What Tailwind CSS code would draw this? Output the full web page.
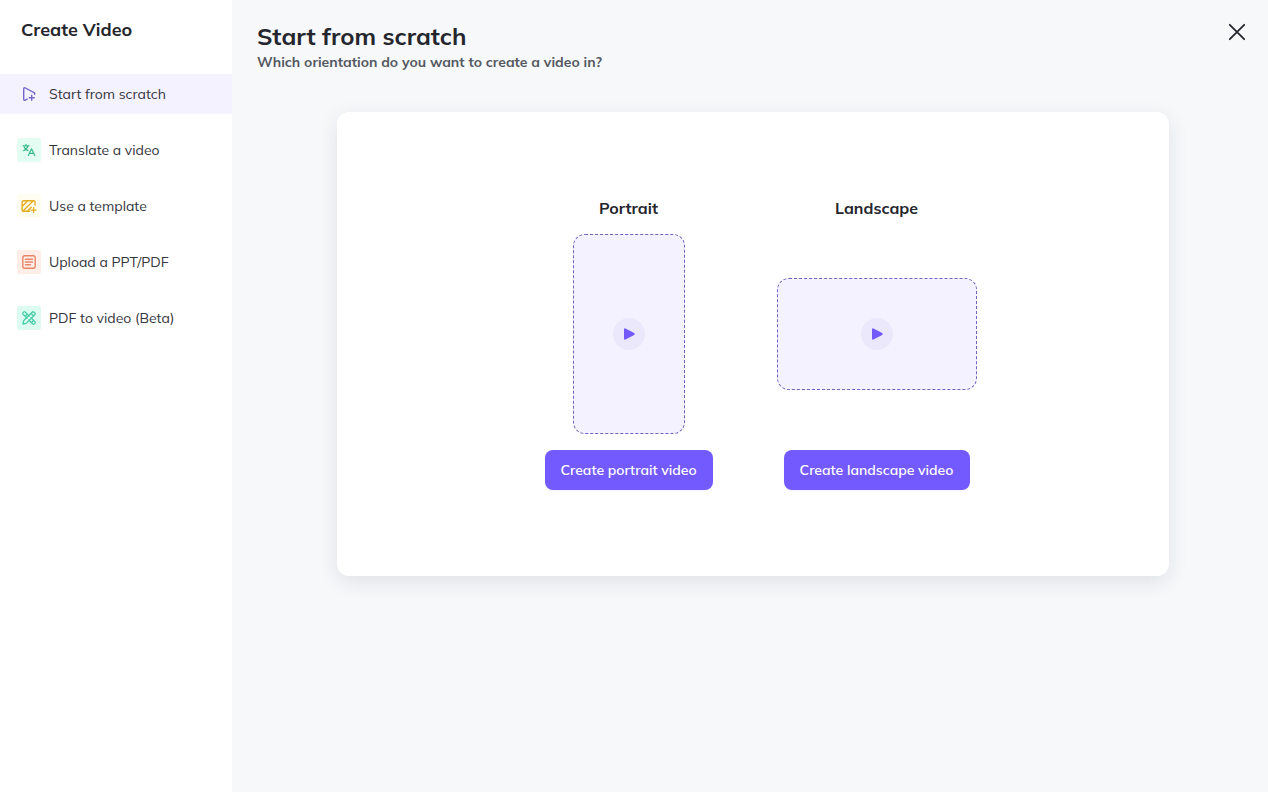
<!DOCTYPE html>
<html lang="en">
<head>
<meta charset="utf-8">
<meta name="viewport" content="width=device-width, initial-scale=1">
<title>Create Video</title>
<script src="https://cdn.jsdelivr.net/npm/@tailwindcss/browser@4"></script>
</head>
<body class="flex min-h-screen bg-[#f6f8fa] font-['Mulish','Noto_Sans',sans-serif] text-[#25262d]">
  <aside class="w-58 shrink-0 bg-white">
    <h2 class="px-[21px] pt-4 text-lg leading-7 font-bold">Create Video</h2>
    <nav class="mt-[30px] flex flex-col gap-4 text-sm text-[#34353c]">
      <a href="#" aria-current="page" class="flex h-10 items-center gap-2 bg-[#f4f2ff] px-[17px]">
        <span class="flex size-6 items-center justify-center">
          <svg class="size-4" viewBox="0 0 16 16" fill="none" stroke="#7267c9" stroke-width="1.400" stroke-linecap="round" stroke-linejoin="round"><path d="M6.200 13.200 4.300 14.200c-.9.400-1.600-.1-1.600-1V3c0-1 .8-1.500 1.700-1L13 6.600c.9.500 1 1.100.5 1.700M10.700 9.300v5M8.200 11.800h5"/></svg>
        </span>
        Start from scratch
      </a>
      <a href="#" class="flex h-10 items-center gap-2 px-[17px]">
        <span class="flex size-6 items-center justify-center rounded-xs bg-[#e3fdf3]">
          <svg class="size-4" viewBox="0 0 16 16" fill="none" stroke="#39b98b" stroke-width="1.200" stroke-linecap="round" stroke-linejoin="round"><path d="M2 3.800h6M5 2.400v1.400M7 3.800C6.400 6.200 4.800 7.800 2.500 8.700M3.300 5.400C4.200 7 5.500 8 7 8.600M7.400 13.400l3.100-6.600 3.300 6.600M8.400 11.300h4.300"/></svg>
        </span>
        Translate a video
      </a>
      <a href="#" class="flex h-10 items-center gap-2 px-[17px]">
        <span class="flex size-6 items-center justify-center rounded-xs bg-[#fffcf0]">
          <svg class="size-4" viewBox="0 0 16 16" fill="none" stroke="#e5ad22" stroke-width="1.400" stroke-linecap="round" stroke-linejoin="round"><path d="M8.500 13.300H2.600c-.9 0-1.500-.6-1.500-1.500V4.200c0-.9.6-1.500 1.500-1.500h10c.9 0 1.500.6 1.500 1.500V7M1.300 8.300l5.500-5.500M2 12.900 12 2.900M6.500 13.100l3.800-3.800M12.600 9.600v5M10.100 12.100h5"/></svg>
        </span>
        Use a template
      </a>
      <a href="#" class="flex h-10 items-center gap-2 px-[17px]">
        <span class="flex size-6 items-center justify-center rounded-xs bg-[#ffeee8]">
          <svg class="size-4" viewBox="0 0 16 16" fill="none" stroke="#ea8467" stroke-width="1.400" stroke-linecap="round" stroke-linejoin="round"><rect x="1.800" y="1.800" width="12.400" height="12.400" rx="2"/><path d="M4.500 5.200h7M4.500 8h7M4.500 10.800h5"/></svg>
        </span>
        Upload a PPT/PDF
      </a>
      <a href="#" class="flex h-10 items-center gap-2 px-[17px]">
        <span class="flex size-6 items-center justify-center rounded-xs bg-[#dcfbf1]">
          <svg class="size-4" viewBox="0 0 16 16" fill="none" stroke="#45cda8" stroke-width="1.300" stroke-linecap="round" stroke-linejoin="round"><path d="m6 8.200-4.100-4.100a1 1 0 0 1 0-1.200l1-1a1 1 0 0 1 1.200 0L8.200 6M10 7.800l4.100 4.100a1 1 0 0 1 0 1.200l-1 1a1 1 0 0 1-1.200 0L7.800 10M2 14l.6-3.200 8.600-8.600a1.300 1.300 0 0 1 1.800 0l.8.8a1.300 1.300 0 0 1 0 1.800l-8.600 8.600L2 14ZM10 3.400 12.600 6M4.200 6.200l1.200-1.200M10.800 12.200l1.200-1.200"/></svg>
        </span>
        PDF to video (Beta)
      </a>
    </nav>
  </aside>

  <main class="min-w-0 flex-1 pt-5 pr-5 pl-[25px]">
    <header class="flex items-start justify-between">
      <div>
        <h1 class="text-2xl leading-8 font-bold">Start from scratch</h1>
        <p class="text-sm leading-5 font-bold text-[#555861]">Which orientation do you want to create a video in?</p>
      </div>
      <button type="button" aria-label="Close" class="flex size-6 items-center justify-center">
        <svg class="size-6" viewBox="0 0 24 24" fill="none" stroke="#25262d" stroke-width="1.800" stroke-linecap="round"><path d="m5.800 4.800 14.400 14.400M20.200 4.800 5.800 19.200"/></svg>
      </button>
    </header>

    <section class="mx-auto mt-10 flex min-h-116 max-w-208 items-center justify-center gap-12 rounded-xl bg-white pb-0.5 shadow-[0_6px_20px_rgba(30,35,50,0.10)]">
      <div class="flex w-50 flex-col items-center">
        <h3 class="text-base leading-6 font-bold">Portrait</h3>
        <div class="mt-3.5 flex h-50 w-28 items-center justify-center rounded-xl border border-dashed border-[#7460bd] bg-[#f4f2ff]">
          <span class="flex size-8 items-center justify-center rounded-full bg-[#ebe8fc]">
            <svg class="size-4" viewBox="0 0 16 16" fill="#735aff" stroke="#735aff" stroke-width="2" stroke-linejoin="round"><path d="M4 3.300v9.400L12.700 8Z"/></svg>
          </span>
        </div>
        <button type="button" class="mt-4 h-10 min-w-42 rounded-lg bg-[#735aff] px-3 text-sm font-semibold whitespace-nowrap text-white shadow-xs">Create portrait video</button>
      </div>
      <div class="flex w-50 flex-col items-center">
        <h3 class="text-base leading-6 font-bold">Landscape</h3>
        <div class="mt-3.5 flex h-50 w-full items-center">
          <div class="flex h-28 w-full items-center justify-center rounded-xl border border-dashed border-[#7460bd] bg-[#f4f2ff]">
            <span class="flex size-8 items-center justify-center rounded-full bg-[#ebe8fc]">
              <svg class="size-4" viewBox="0 0 16 16" fill="#735aff" stroke="#735aff" stroke-width="2" stroke-linejoin="round"><path d="M4 3.300v9.400L12.700 8Z"/></svg>
            </span>
          </div>
        </div>
        <button type="button" class="mt-4 h-10 min-w-[186px] rounded-lg bg-[#735aff] px-3 text-sm font-semibold whitespace-nowrap text-white shadow-xs">Create landscape video</button>
      </div>
    </section>
  </main>
</body>
</html>
